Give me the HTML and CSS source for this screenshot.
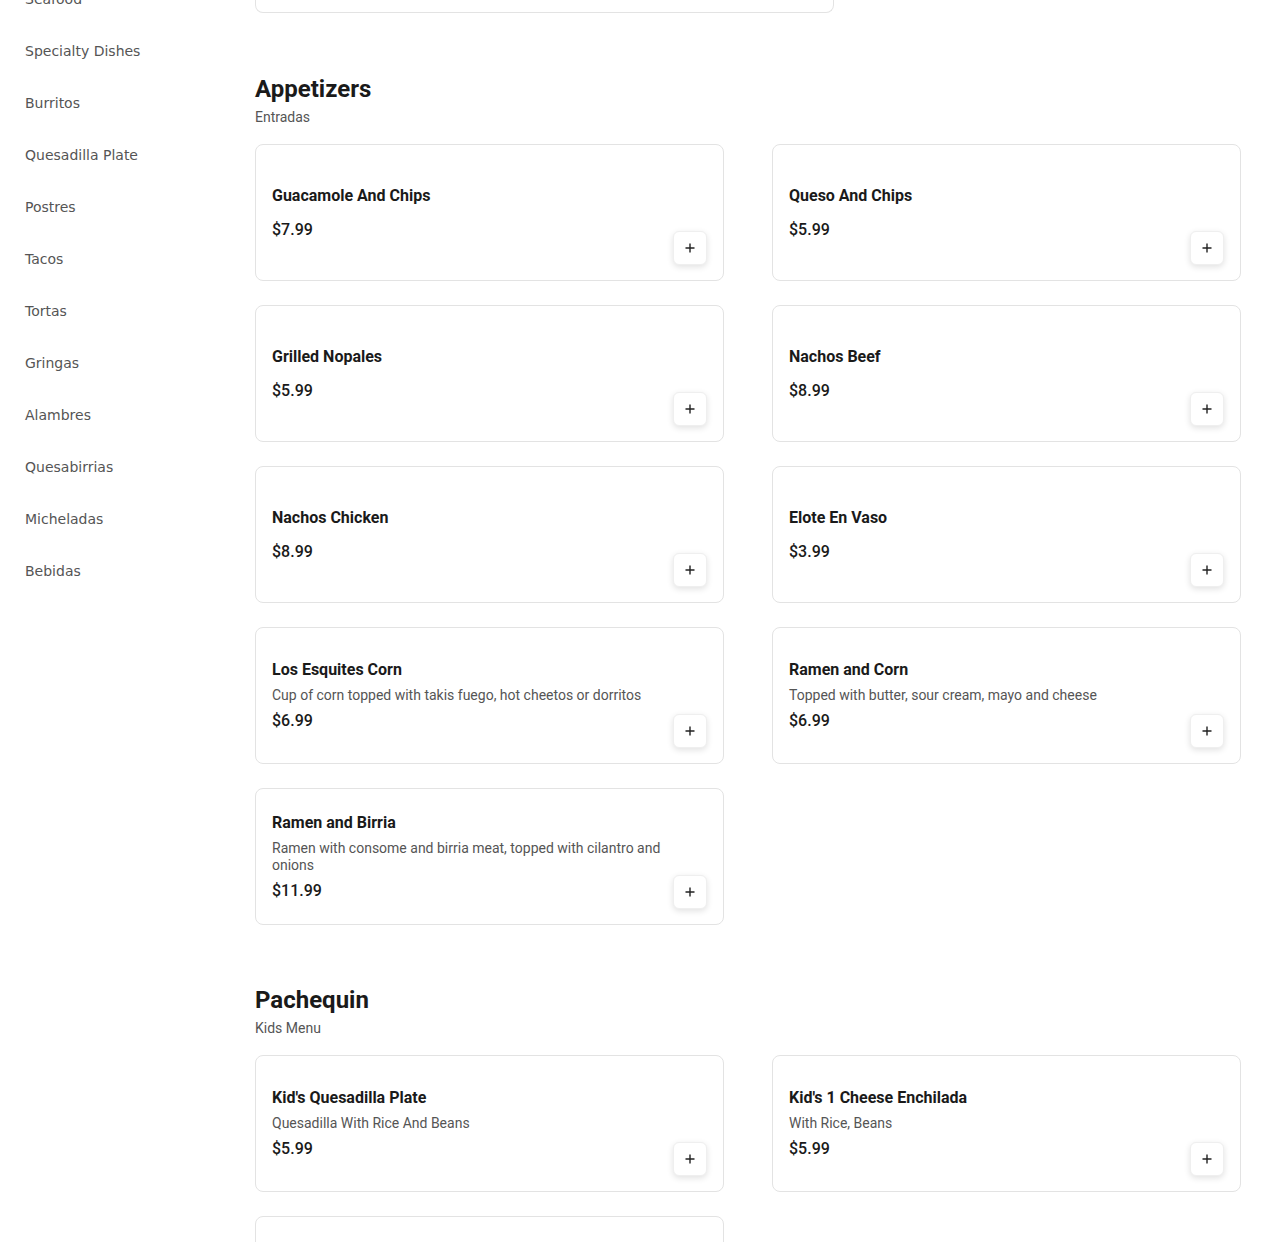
FILE: index.html
```html
<!DOCTYPE html>
<html lang="en">
<head>
<meta charset="utf-8">
<title>Menu</title>
<link rel="stylesheet" href="styles.css">
</head>
<body>
<div class="page">
  <nav class="sidebar">
    <a class="nav-link">Seafood</a>
    <a class="nav-link">Specialty Dishes</a>
    <a class="nav-link">Burritos</a>
    <a class="nav-link">Quesadilla Plate</a>
    <a class="nav-link">Postres</a>
    <a class="nav-link">Tacos</a>
    <a class="nav-link">Tortas</a>
    <a class="nav-link">Gringas</a>
    <a class="nav-link">Alambres</a>
    <a class="nav-link">Quesabirrias</a>
    <a class="nav-link">Micheladas</a>
    <a class="nav-link">Bebidas</a>
  </nav>
  <main class="main">
    <div class="prev-card"></div>

    <section class="section">
      <h2 class="section-title">Appetizers</h2>
      <p class="section-sub">Entradas</p>
      <div class="grid">
        <div class="card">
          <div class="card-body">
            <h3 class="item-title">Guacamole And Chips</h3>
            <div class="item-price">$7.99</div>
          </div>
          <button class="add-btn" aria-label="Add"><svg viewBox="0 0 12 12" width="12" height="12"><path d="M6 1.5v9M1.5 6h9" stroke="#222" stroke-width="1.4" fill="none"/></svg></button>
        </div>
        <div class="card">
          <div class="card-body">
            <h3 class="item-title">Queso And Chips</h3>
            <div class="item-price">$5.99</div>
          </div>
          <button class="add-btn" aria-label="Add"><svg viewBox="0 0 12 12" width="12" height="12"><path d="M6 1.5v9M1.5 6h9" stroke="#222" stroke-width="1.4" fill="none"/></svg></button>
        </div>
        <div class="card">
          <div class="card-body">
            <h3 class="item-title">Grilled Nopales</h3>
            <div class="item-price">$5.99</div>
          </div>
          <button class="add-btn" aria-label="Add"><svg viewBox="0 0 12 12" width="12" height="12"><path d="M6 1.5v9M1.5 6h9" stroke="#222" stroke-width="1.4" fill="none"/></svg></button>
        </div>
        <div class="card">
          <div class="card-body">
            <h3 class="item-title">Nachos Beef</h3>
            <div class="item-price">$8.99</div>
          </div>
          <button class="add-btn" aria-label="Add"><svg viewBox="0 0 12 12" width="12" height="12"><path d="M6 1.5v9M1.5 6h9" stroke="#222" stroke-width="1.4" fill="none"/></svg></button>
        </div>
        <div class="card">
          <div class="card-body">
            <h3 class="item-title">Nachos Chicken</h3>
            <div class="item-price">$8.99</div>
          </div>
          <button class="add-btn" aria-label="Add"><svg viewBox="0 0 12 12" width="12" height="12"><path d="M6 1.5v9M1.5 6h9" stroke="#222" stroke-width="1.4" fill="none"/></svg></button>
        </div>
        <div class="card">
          <div class="card-body">
            <h3 class="item-title">Elote En Vaso</h3>
            <div class="item-price">$3.99</div>
          </div>
          <button class="add-btn" aria-label="Add"><svg viewBox="0 0 12 12" width="12" height="12"><path d="M6 1.5v9M1.5 6h9" stroke="#222" stroke-width="1.4" fill="none"/></svg></button>
        </div>
        <div class="card">
          <div class="card-body">
            <h3 class="item-title">Los Esquites Corn</h3>
            <p class="item-desc">Cup of corn topped with takis fuego, hot cheetos or dorritos</p>
            <div class="item-price">$6.99</div>
          </div>
          <button class="add-btn" aria-label="Add"><svg viewBox="0 0 12 12" width="12" height="12"><path d="M6 1.5v9M1.5 6h9" stroke="#222" stroke-width="1.4" fill="none"/></svg></button>
        </div>
        <div class="card">
          <div class="card-body">
            <h3 class="item-title">Ramen and Corn</h3>
            <p class="item-desc">Topped with butter, sour cream, mayo and cheese</p>
            <div class="item-price">$6.99</div>
          </div>
          <button class="add-btn" aria-label="Add"><svg viewBox="0 0 12 12" width="12" height="12"><path d="M6 1.5v9M1.5 6h9" stroke="#222" stroke-width="1.4" fill="none"/></svg></button>
        </div>
        <div class="card">
          <div class="card-body">
            <h3 class="item-title">Ramen and Birria</h3>
            <p class="item-desc">Ramen with consome and birria meat, topped with cilantro and onions</p>
            <div class="item-price">$11.99</div>
          </div>
          <button class="add-btn" aria-label="Add"><svg viewBox="0 0 12 12" width="12" height="12"><path d="M6 1.5v9M1.5 6h9" stroke="#222" stroke-width="1.4" fill="none"/></svg></button>
        </div>
      </div>
    </section>

    <section class="section">
      <h2 class="section-title">Pachequin</h2>
      <p class="section-sub">Kids Menu</p>
      <div class="grid">
        <div class="card">
          <div class="card-body">
            <h3 class="item-title">Kid's Quesadilla Plate</h3>
            <p class="item-desc">Quesadilla With Rice And Beans</p>
            <div class="item-price">$5.99</div>
          </div>
          <button class="add-btn" aria-label="Add"><svg viewBox="0 0 12 12" width="12" height="12"><path d="M6 1.5v9M1.5 6h9" stroke="#222" stroke-width="1.4" fill="none"/></svg></button>
        </div>
        <div class="card">
          <div class="card-body">
            <h3 class="item-title">Kid's 1 Cheese Enchilada</h3>
            <p class="item-desc">With Rice, Beans</p>
            <div class="item-price">$5.99</div>
          </div>
          <button class="add-btn" aria-label="Add"><svg viewBox="0 0 12 12" width="12" height="12"><path d="M6 1.5v9M1.5 6h9" stroke="#222" stroke-width="1.4" fill="none"/></svg></button>
        </div>
        <div class="card card-partial"></div>
      </div>
    </section>
  </main>
</div>
</body>
</html>
```
FILE: styles.css
```css
* { box-sizing: border-box; }

html, body {
  margin: 0;
  padding: 0;
  background: #ffffff;
  overflow: hidden;
}

.page {
  display: flex;
  margin-top: -27px;
}

.sidebar {
  width: 255px;
  flex: none;
  padding-left: 25px;
  display: flex;
  flex-direction: column;
}

.nav-link {
  display: block;
  height: 52px;
  line-height: 52px;
  font-family: "DejaVu Sans", sans-serif;
  font-size: 14px;
  color: #555555;
  text-decoration: none;
}

.main {
  width: 986px;
  flex: none;
  font-family: Roboto, "Liberation Sans", sans-serif;
}

.prev-card {
  width: 579px;
  height: 40px;
  border: 1px solid #e3e3e3;
  border-top: none;
  border-radius: 0 0 8px 8px;
}

.section {
  padding-top: 60px;
}

.section + .section {
  padding-top: 59px;
}

.section-title {
  margin: 0;
  font-size: 24px;
  line-height: 32px;
  font-weight: 700;
  color: #1a1a1a;
}

.section-sub {
  margin: 2px 0 17px;
  font-size: 14px;
  line-height: 20px;
  color: #555555;
}

.grid {
  display: grid;
  grid-template-columns: 469px 469px;
  column-gap: 48px;
  row-gap: 24px;
}

.card {
  min-height: 137px;
  border: 1px solid #e3e3e3;
  border-radius: 8px;
  padding: 16px;
  display: flex;
  align-items: stretch;
  background: #fff;
}

.card-body {
  flex: 1;
  display: flex;
  flex-direction: column;
  justify-content: center;
  padding-right: 12px;
}

.item-title {
  margin: 0 0 5px;
  font-size: 16px;
  line-height: 24px;
  font-weight: 700;
  color: #1a1a1a;
}

.item-title + .item-price {
  margin-top: 5px;
}

.item-desc {
  margin: 0 0 5px;
  font-size: 14px;
  line-height: 17px;
  color: #555555;
}

.item-price {
  font-size: 16px;
  line-height: 24px;
  font-weight: 500;
  color: #1a1a1a;
}

.add-btn {
  align-self: flex-end;
  width: 34px;
  height: 34px;
  flex: none;
  padding: 0;
  margin-bottom: -1px;
  border: 1px solid #efefef;
  border-radius: 6px;
  background: #ffffff;
  box-shadow: 0 2px 6px rgba(0, 0, 0, 0.12);
  display: flex;
  align-items: center;
  justify-content: center;
  cursor: pointer;
}

.add-btn svg { display: block; }
```
